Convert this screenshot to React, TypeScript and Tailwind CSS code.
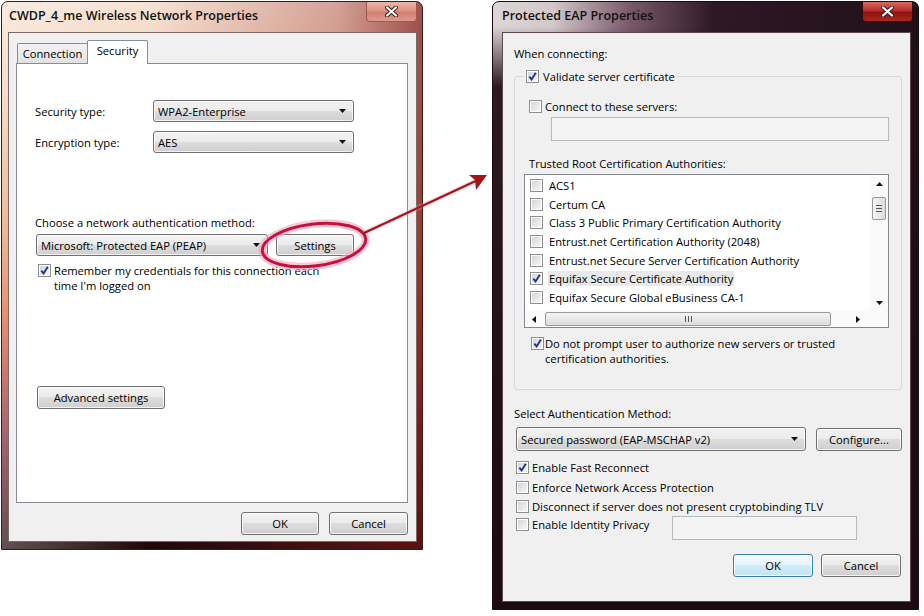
import React from 'react';

// Win7 style dialogs: wireless network properties + PEAP properties

const BTN =
  'flex items-center justify-center rounded-[3px] border border-[#707070] bg-[linear-gradient(#f3f3f3_0%,#ebebeb_49%,#dddddd_50%,#cfcfcf_100%)] shadow-[inset_0_0_0_1px_rgba(255,255,255,0.75)]';

function Tri({ up }: { up?: boolean }) {
  return (
    <svg width="7" height="4" viewBox="0 0 7 4" className="shrink-0">
      <path d={up ? 'M0 4h7L3.5 0z' : 'M0 0h7L3.5 4z'} fill="#111" />
    </svg>
  );
}

function Check({ on }: { on?: boolean }) {
  return (
    <span className="flex h-[13px] w-[13px] shrink-0 items-center justify-center border border-[#8e8f8f] bg-white p-[1px]">
      <span className="flex h-full w-full items-center justify-center bg-[linear-gradient(135deg,#d6d6d6,#f6f6f6)]">
        {on && (
          <svg width="9" height="9" viewBox="0 0 9 9">
            <path
              d="M1.3 4.6 L3.6 7.4 L7.8 0.8"
              stroke="#20348e"
              strokeWidth="1.9"
              fill="none"
            />
          </svg>
        )}
      </span>
    </span>
  );
}

function Combo({
  children,
  className,
}: {
  children: React.ReactNode;
  className: string;
}) {
  return (
    <div className={`${BTN} !justify-between pl-[4px] pr-[7px] ${className}`}>
      <span>{children}</span>
      <Tri />
    </div>
  );
}

function CheckRow({
  on,
  className = '',
  children,
}: {
  on?: boolean;
  className?: string;
  children: React.ReactNode;
}) {
  return (
    <div className={`flex items-center gap-[3px] ${className}`}>
      <Check on={on} />
      <span>{children}</span>
    </div>
  );
}

function CloseBtn({ dark }: { dark?: boolean }) {
  return (
    <div
      className={`mr-[5px] flex h-[20px] w-[51px] items-center justify-center rounded-b-[4px] border border-t-0 ${
        dark
          ? 'border-[#3a0a0a] bg-[linear-gradient(#d86a5e_0%,#b8302a_45%,#8e1410_55%,#a8281e_100%)]'
          : 'border-[#a0584e] bg-[linear-gradient(#eab5a8_0%,#dc9384_45%,#d27f72_55%,#dc9a8c_100%)]'
      }`}
    >
      <svg width="13" height="11" viewBox="0 0 13 11">
        <path
          d="M2 1.5 L11 9.5 M11 1.5 L2 9.5"
          stroke="#3a1a1a"
          strokeWidth="4"
          strokeLinecap="round"
        />
        <path
          d="M2 1.5 L11 9.5 M11 1.5 L2 9.5"
          stroke="#fff"
          strokeWidth="2.2"
          strokeLinecap="round"
        />
      </svg>
    </div>
  );
}

function WirelessWindow() {
  return (
    <div className="flex h-[549px] w-[422px] shrink-0 flex-col rounded-t-[7px] border border-[#3a1a1a] bg-[linear-gradient(to_right,rgba(255,255,255,0.3)_0%,transparent_35%,rgba(150,40,40,0.35)_80%,rgba(120,20,20,0.7)_100%),linear-gradient(to_bottom,#f6e3d5_0%,#f0ccb0_18%,#ea9a62_42%,#d8602e_58%,#8a2238_78%,#1c0608_100%)]">
      <div className="flex h-[30px] items-start">
        <span className="pl-[7px] pt-[6px] text-[12.5px] font-semibold text-[#111]">
          CWDP_4_me Wireless Network Properties
        </span>
        <div className="ml-auto">
          <CloseBtn />
        </div>
      </div>
      <div className="ml-[6px] flex h-[510px] w-[409px] flex-col border border-[#7a6a66] bg-[#f0f0f0] px-[7px] pt-[6px]">
        {/* tabs */}
        <div className="relative z-10 flex h-[24px] items-end pl-[1px]">
          <div className="flex h-[20px] w-[71px] items-center justify-center rounded-t-[2px] border border-b-0 border-[#898c95] bg-[linear-gradient(#f2f2f2,#e1e1e1)]">
            Connection
          </div>
          <div className="-mb-px -ml-px flex h-[24px] w-[61px] items-start justify-center rounded-t-[2px] border border-b-0 border-[#898c95] bg-white pt-[2px]">
            Security
          </div>
        </div>
        <div className="flex h-[440px] w-[392px] flex-col border border-[#898c95] bg-white pl-[18px] pt-[36px]">
          <div className="flex items-center">
            <span className="w-[118px]">Security type:</span>
            <Combo className="h-[22px] w-[201px]">WPA2-Enterprise</Combo>
          </div>
          <div className="mt-[9px] flex items-center">
            <span className="w-[118px]">Encryption type:</span>
            <Combo className="h-[22px] w-[201px]">AES</Combo>
          </div>
          <div className="mt-[62px]">Choose a network authentication method:</div>
          <div className="ml-[1px] mt-[4px] flex items-center gap-[8px]">
            <Combo className="h-[22px] w-[232px]">
              Microsoft: Protected EAP (PEAP)
            </Combo>
            <div className={`${BTN} h-[22px] w-[78px]`}>Settings</div>
          </div>
          <div className="ml-[3px] mt-[7px] flex items-start gap-[3px]">
            <div className="pt-[1px]">
              <Check on />
            </div>
            <span>
              Remember my credentials for this connection each
              <br />
              time I'm logged on
            </span>
          </div>
          <div className={`${BTN} ml-[2px] mt-[93px] h-[23px] w-[128px]`}>
            Advanced settings
          </div>
        </div>
        <div className="mt-[9px] flex justify-end gap-[10px] pr-[1px]">
          <div className={`${BTN} h-[23px] w-[78px]`}>OK</div>
          <div className={`${BTN} h-[23px] w-[79px]`}>Cancel</div>
        </div>
      </div>
    </div>
  );
}

const CAS: { name: string; on?: boolean }[] = [
  { name: 'ACS1' },
  { name: 'Certum CA' },
  { name: 'Class 3 Public Primary Certification Authority' },
  { name: 'Entrust.net Certification Authority (2048)' },
  { name: 'Entrust.net Secure Server Certification Authority' },
  { name: 'Equifax Secure Certificate Authority', on: true },
  { name: 'Equifax Secure Global eBusiness CA-1' },
];

function CertList() {
  return (
    <div className="ml-[9px] mt-[3px] flex h-[154px] w-[365px] flex-col border border-[#828790] bg-white">
      <div className="flex h-[136px]">
        <div className="flex-1 overflow-hidden pl-[5px] pt-[1px]">
          {CAS.map((c) => (
            <div key={c.name} className="flex h-[18.7px] items-center gap-[5px]">
              <Check on={c.on} />
              <span
                className={`whitespace-nowrap px-[1px] ${c.on ? 'bg-[#e9e9e9]' : ''}`}
              >
                {c.name}
              </span>
            </div>
          ))}
        </div>
        <div className="flex w-[18px] flex-col items-center bg-[#fafafa]">
          <div className="flex h-[17px] items-center">
            <Tri up />
          </div>
          <div className="mt-[5px] flex h-[23px] w-[14px] flex-col items-center justify-center gap-[2px] rounded-[2px] border border-[#9a9a9a] bg-[linear-gradient(to_right,#f4f4f4,#dcdcdc)]">
            <span className="h-px w-[6px] bg-[#555]" />
            <span className="h-px w-[6px] bg-[#555]" />
            <span className="h-px w-[6px] bg-[#555]" />
          </div>
          <div className="mt-auto flex h-[17px] items-center">
            <Tri />
          </div>
        </div>
      </div>
      <div className="flex h-[16px] items-center bg-[#fafafa]">
        <div className="flex w-[17px] justify-center">
          <svg width="4" height="7" viewBox="0 0 4 7">
            <path d="M4 0v7L0 3.5z" fill="#111" />
          </svg>
        </div>
        <div className="flex w-[307px] items-center">
          <div className="ml-[3px] flex h-[14px] w-[286px] items-center justify-center gap-[2px] rounded-[2px] border border-[#9a9a9a] bg-[linear-gradient(#f4f4f4,#dcdcdc)]">
            <span className="h-[6px] w-px bg-[#555]" />
            <span className="h-[6px] w-px bg-[#555]" />
            <span className="h-[6px] w-px bg-[#555]" />
          </div>
        </div>
        <div className="flex w-[17px] justify-center">
          <svg width="4" height="7" viewBox="0 0 4 7">
            <path d="M0 0v7L4 3.5z" fill="#111" />
          </svg>
        </div>
        <div className="w-[18px]" />
      </div>
    </div>
  );
}

function PeapWindow() {
  return (
    <div className="ml-[69px] flex h-[609px] w-[427px] shrink-0 flex-col rounded-t-[7px] border border-[#1a0a0e] bg-[linear-gradient(to_bottom,transparent_0%,transparent_4%,rgba(35,14,22,0.95)_14%,#1c0a10_100%),linear-gradient(to_right,#dcd6d6_0%,#d2c8ca_14%,#7a5a6a_32%,#2e1826_52%,#201018_100%)]">
      <div className="flex h-[30px] items-start">
        <span className="pl-[9px] pt-[6px] text-[12.5px] font-semibold text-[#111]">
          Protected EAP Properties
        </span>
        <div className="ml-auto">
          <CloseBtn dark />
        </div>
      </div>
      <div className="ml-[9px] flex h-[570px] w-[409px] flex-col border border-[#5a4a4e] bg-[#f0f0f0] pl-[11px] pt-[13px]">
        <div>When connecting:</div>
        <fieldset className="mt-[8px] w-[388px] rounded-[3px] border border-[#d5d9dd] pb-[23px]">
          <legend className="ml-[9px] flex items-center gap-[4px] px-[2px]">
            <Check on />
            <span>Validate server certificate</span>
          </legend>
          <CheckRow className="ml-[14px] mt-[15px]">Connect to these servers:</CheckRow>
          <div className="ml-[36px] mt-[3px] h-[24px] w-[338px] border border-[#b5b8bd] bg-[#f4f4f4]" />
          <div className="ml-[14px] mt-[15px]">Trusted Root Certification Authorities:</div>
          <CertList />
          <div className="ml-[16px] mt-[8px] flex items-start gap-[1px]">
            <div className="pt-[1px]">
              <Check on />
            </div>
            <span>
              Do not prompt user to authorize new servers or trusted
              <br />
              certification authorities.
            </span>
          </div>
        </fieldset>
        <div className="mt-[16px]">Select Authentication Method:</div>
        <div className="ml-[2px] mt-[6px] flex items-center gap-[10px]">
          <Combo className="h-[24px] w-[290px]">Secured password (EAP-MSCHAP v2)</Combo>
          <div className={`${BTN} h-[23px] w-[86px]`}>Configure...</div>
        </div>
        <div className="ml-[2px] mt-[6px] flex flex-col">
          <CheckRow on className="h-[20px]">
            Enable Fast Reconnect
          </CheckRow>
          <CheckRow className="h-[20px]">Enforce Network Access Protection</CheckRow>
          <CheckRow className="h-[19px]">
            Disconnect if server does not present cryptobinding TLV
          </CheckRow>
          <div className="flex items-start">
            <CheckRow className="h-[17px] w-[156px]">Enable Identity Privacy</CheckRow>
            <div className="h-[24px] w-[185px] border border-[#b5b8bd] bg-[#f4f4f4]" />
          </div>
        </div>
        <div className="mt-[14px] flex justify-end gap-[8px] pr-[9px]">
          <div className="flex h-[23px] w-[80px] items-center justify-center rounded-[3px] border border-[#3c7fb1] bg-[linear-gradient(#f4fbfe_0%,#e5f4fc_49%,#d2ecf9_50%,#c4e4f5_100%)] shadow-[inset_0_0_0_1px_rgba(255,255,255,0.8)]">
            OK
          </div>
          <div className={`${BTN} h-[23px] w-[80px]`}>Cancel</div>
        </div>
      </div>
    </div>
  );
}

export default function App() {
  return (
    <div className="relative h-[616px] w-[924px] overflow-hidden bg-white font-['Open_Sans','Liberation_Sans',sans-serif] text-[11.2px] leading-[15px] text-black">
      <div className="flex items-start pl-[1px] pt-[1px]">
        <WirelessWindow />
        <PeapWindow />
      </div>
      {/* red callout: ring around Settings + arrow to the PEAP dialog */}
      <svg
        className="pointer-events-none absolute left-0 top-0"
        width="924"
        height="616"
        viewBox="0 0 924 616"
      >
        <g transform="rotate(-7 314 245)">
          <ellipse cx="314" cy="245" rx="52" ry="21" fill="none" stroke="#f4a6c0" strokeWidth="8" opacity="0.6" />
          <ellipse cx="314" cy="245" rx="52" ry="21" fill="none" stroke="#c8103f" strokeWidth="3" />
        </g>
        <line x1="366" y1="232" x2="480" y2="179" stroke="#f4a6c0" strokeWidth="5" opacity="0.35" />
        <line x1="364" y1="233" x2="480" y2="179" stroke="#a3141c" strokeWidth="2.4" />
        <polygon points="487,175 469,175 475,180 476,190" fill="#a3141c" />
      </svg>
    </div>
  );
}
